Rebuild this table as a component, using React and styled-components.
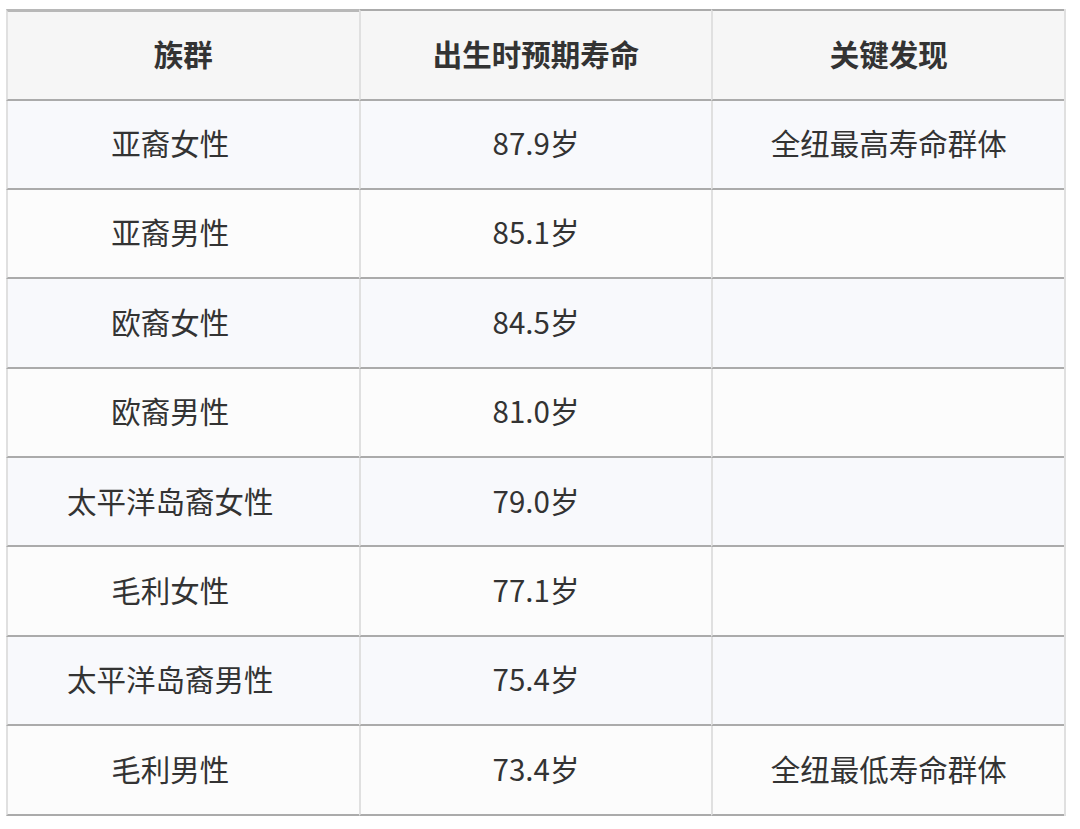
import React from "react";
import styled, { createGlobalStyle } from "styled-components";

const rows = [
    ["亚裔女性", "87.9岁", "全纽最高寿命群体"],
    ["亚裔男性", "85.1岁", ""],
    ["欧裔女性", "84.5岁", ""],
    ["欧裔男性", "81.0岁", ""],
    ["太平洋岛裔女性", "79.0岁", ""],
    ["毛利女性", "77.1岁", ""],
    ["太平洋岛裔男性", "75.4岁", ""],
    ["毛利男性", "73.4岁", "全纽最低寿命群体"],
];

export default function App() {
    return (
        <>
            <GlobalStyle />
            <Page>
                <Table>
                    <thead>
                        <tr>
                            <HeadCell $first>族群</HeadCell>
                            <HeadCell>出生时预期寿命</HeadCell>
                            <HeadCell>关键发现</HeadCell>
                        </tr>
                    </thead>
                    <tbody>
                        {rows.map((row, i) => (
                            <Row key={i} $odd={i % 2 === 0}>
                                {row.map((text, j) => (
                                    <Cell key={j} $first={j === 0}>{text}</Cell>
                                ))}
                            </Row>
                        ))}
                    </tbody>
                </Table>
            </Page>
        </>
    );
}

const GlobalStyle = createGlobalStyle`
    html, body {
        margin: 0;
        padding: 0;
        background: #ffffff;
    }
`;

const Page = styled.div`
    padding: 9px 0 0 6px;
    font-family: "Noto Sans CJK SC", "Noto Sans", sans-serif;
    color: #333333;
`;

const Table = styled.table`
    width: 1060px;
    table-layout: fixed;
    border-collapse: separate;
    border-spacing: 0;
    border-right: 2px solid #e0e0e0;
`;

const HeadCell = styled.th`
    box-sizing: border-box;
    height: 91.5px;
    padding: 0 0 4px;
    background: #f6f6f6;
    font-size: 29.5px;
    line-height: 1.3;
    font-weight: 700;
    color: #333333;
    text-align: center;
    vertical-align: middle;
    border-top: ${(p) => (p.$first ? "3px solid #b8b8b8" : "2px solid #ababab")};
    border-left: 2px solid #e0e0e0;
    border-bottom: 2px solid #ababab;
`;

const Row = styled.tr`
    background: ${(p) => (p.$odd ? "#f8f9fc" : "#fcfcfc")};
`;

const Cell = styled.td`
    box-sizing: border-box;
    height: 89.4px;
    padding: 0 ${(p) => (p.$first ? "26px" : "0")} 4px 0;
    font-size: 29.5px;
    line-height: 1.3;
    color: #333333;
    text-align: center;
    vertical-align: middle;
    border-left: 2px solid #e0e0e0;
    border-bottom: 2px solid #ababab;
`;
